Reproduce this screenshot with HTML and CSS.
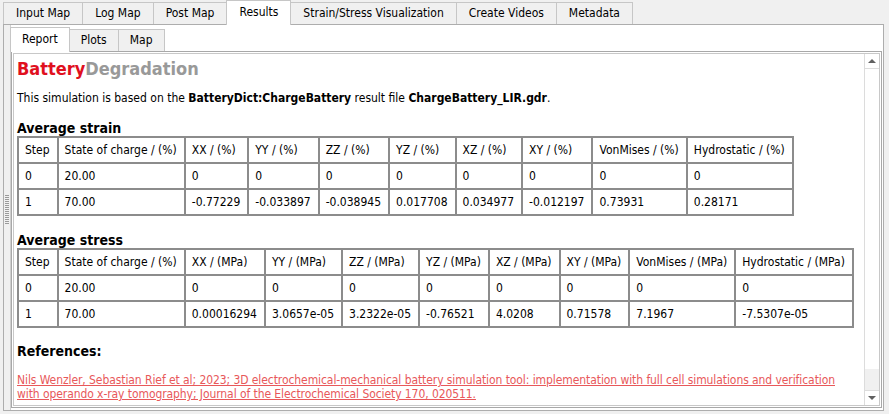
FILE: index.html
```html
<!DOCTYPE html>
<html lang="en">
<head>
    <meta charset="UTF-8">
    <title>Results - Report</title>
    <link rel="stylesheet" href="styles.css">
</head>
<body>
    <div class="window">
        <!-- main tabs -->
        <div class="tabbar">
            <div class="tab">Input Map</div>
            <div class="tab">Log Map</div>
            <div class="tab">Post Map</div>
            <div class="tab active">Results</div>
            <div class="tab">Strain/Stress Visualization</div>
            <div class="tab">Create Videos</div>
            <div class="tab">Metadata</div>
        </div>

        <div class="panel">
            <div class="grip"></div>
            <div class="inner">
                <div class="tabbar sub">
                    <div class="tab active">Report</div>
                    <div class="tab">Plots</div>
                    <div class="tab">Map</div>
                </div>

                <div class="frame">
                    <div class="report">
                        <h1 class="title"><span class="red">Battery</span><span class="grey">Degradation</span></h1>
                        <p class="intro">This simulation is based on the <b>BatteryDict:ChargeBattery</b> result file <b>ChargeBattery_LIR.gdr</b>.</p>

                        <h3>Average strain</h3>
                        <table class="data">
                            <tr>
                                <td>Step</td><td>State of charge / (%)</td><td>XX / (%)</td><td>YY / (%)</td><td>ZZ / (%)</td>
                                <td>YZ / (%)</td><td>XZ / (%)</td><td>XY / (%)</td><td>VonMises / (%)</td><td>Hydrostatic / (%)</td>
                            </tr>
                            <tr>
                                <td>0</td><td>20.00</td><td>0</td><td>0</td><td>0</td><td>0</td><td>0</td><td>0</td><td>0</td><td>0</td>
                            </tr>
                            <tr>
                                <td>1</td><td>70.00</td><td>-0.77229</td><td>-0.033897</td><td>-0.038945</td>
                                <td>0.017708</td><td>0.034977</td><td>-0.012197</td><td>0.73931</td><td>0.28171</td>
                            </tr>
                        </table>

                        <h3>Average stress</h3>
                        <table class="data">
                            <tr>
                                <td>Step</td><td>State of charge / (%)</td><td>XX / (MPa)</td><td>YY / (MPa)</td><td>ZZ / (MPa)</td>
                                <td>YZ / (MPa)</td><td>XZ / (MPa)</td><td>XY / (MPa)</td><td>VonMises / (MPa)</td><td>Hydrostatic / (MPa)</td>
                            </tr>
                            <tr>
                                <td>0</td><td>20.00</td><td>0</td><td>0</td><td>0</td><td>0</td><td>0</td><td>0</td><td>0</td><td>0</td>
                            </tr>
                            <tr>
                                <td>1</td><td>70.00</td><td>0.00016294</td><td>3.0657e-05</td><td>3.2322e-05</td>
                                <td>-0.76521</td><td>4.0208</td><td>0.71578</td><td>7.1967</td><td>-7.5307e-05</td>
                            </tr>
                        </table>

                        <h3 class="refs-head">References:</h3>
                        <p class="refs">
                            <a href="#">Nils Wenzler, Sebastian Rief et al; 2023; 3D electrochemical-mechanical battery simulation tool: implementation with full cell simulations and verification with operando x-ray tomography; Journal of the Electrochemical Society 170, 020511.</a>
                        </p>
                    </div>

                    <!-- vertical scrollbar -->
                    <div class="vscroll">
                        <div class="arrow up"></div>
                        <div class="thumb"></div>
                        <div class="track"></div>
                        <div class="arrow down"></div>
                    </div>
                </div>
            </div>
        </div>
    </div>
</body>
</html>
```

FILE: styles.css
```css
body {
    margin: 0;
    background-color: #f0f0f0;
    font-family: "DejaVu Sans Condensed", "DejaVu Sans", sans-serif;
    font-size: 12px;
    color: #000;
}

.window {
    width: 889px;
    height: 414px;
    padding: 1px 5px 0 3px;
    box-sizing: border-box;
    display: flex;
    flex-direction: column;
}

/* tabs */
.tabbar {
    display: flex;
    align-items: flex-end;
    height: 23px;
    padding-left: 1px;
}

.tab {
    height: 21px;
    line-height: 21px;
    padding: 0 12px;
    background-color: #f0f0f0;
    border: 1px solid #c6c6c6;
    border-bottom: none;
    margin-left: -1px;
    color: #000;
    white-space: nowrap;
}

.tab.active {
    height: 24px;
    line-height: 23px;
    background-color: #fff;
    border-color: #c6c6c6;
    position: relative;
    z-index: 1;
    margin-bottom: -1px;
}

.panel {
    flex: 1;
    display: flex;
    background-color: #fff;
    border: 1px solid #adadad;
    margin-bottom: 3px;
}

.grip {
    width: 6px;
    background:
        repeating-linear-gradient(#f0f0f0 0 1px, #9a9a9a 1px 2px) 1px 169px / 4px 31px no-repeat,
        #f0f0f0;
    border-right: 1px solid #cfcfcf;
}

.inner {
    flex: 1;
    display: flex;
    flex-direction: column;
    padding: 2px 1px 2px 0;
}

.tabbar.sub {
    height: 24px;
    padding-left: 0;
}

.tabbar.sub .tab {
    padding: 0 11px;
}

.frame {
    flex: 1;
    display: flex;
    border: 1px solid #a8a8a8;
    box-shadow: inset 0 0 0 1px #fff, inset 0 0 0 2px #c8c8c8;
    padding: 2px;
    min-height: 0;
}

/* report content */
.report {
    flex: 1;
    overflow: hidden;
    padding: 3px 6px 0 3px;
}

.title {
    font-size: 18px;
    font-weight: bold;
    margin: 1px 0 12px 0;
}

.red {
    color: #e0101e;
}

.grey {
    color: #999;
}

.intro {
    margin: 0 0 15px 0;
}

h3 {
    font-size: 14px;
    margin: 0;
    line-height: 16px;
}

table.data {
    border-collapse: separate;
    border-spacing: 0;
    border: 1px solid #8c8c8c;
    margin-bottom: 16px;
}

table.data td {
    border: 1px solid #8c8c8c;
    height: 24px;
    padding: 0 7px 0 6px;
    white-space: nowrap;
}

.refs-head {
    margin-top: -1px;
}

.refs {
    margin: 14px 0 0 0;
    line-height: 14px;
    letter-spacing: -0.08px;
}

.refs a {
    color: #e8585a;
}

/* scrollbar */
.vscroll {
    width: 14px;
    display: flex;
    flex-direction: column;
    border-left: 1px solid #dcdcdc;
    background-color: #f0f0f0;
}

.arrow {
    height: 14px;
    background-color: #fff;
    border-bottom: 1px solid #dcdcdc;
    display: flex;
    align-items: center;
    justify-content: center;
}

.arrow.down {
    border-bottom: none;
    border-top: 1px solid #dcdcdc;
}

.arrow::after {
    content: "";
    border-left: 4px solid transparent;
    border-right: 4px solid transparent;
}

.arrow.up::after {
    border-bottom: 4px solid #606060;
}

.arrow.down::after {
    border-top: 4px solid #606060;
}

.thumb {
    flex: 0 0 300px;
    background-color: #fff;
}

.track {
    flex: 1;
}
```
